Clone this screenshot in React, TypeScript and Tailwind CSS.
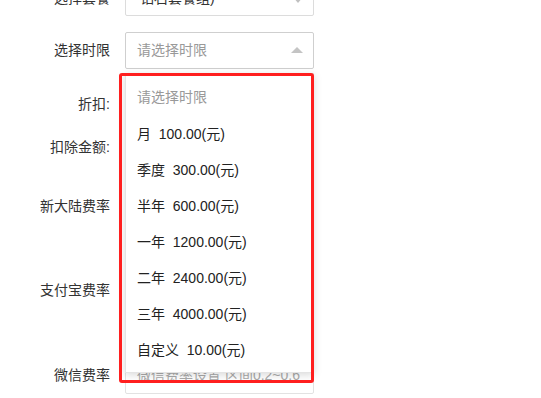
import React from "react";

// Options for the duration select
const options = [
  { name: "月", price: "100.00" },
  { name: "季度", price: "300.00" },
  { name: "半年", price: "600.00" },
  { name: "一年", price: "1200.00" },
  { name: "二年", price: "2400.00" },
  { name: "三年", price: "4000.00" },
  { name: "自定义", price: "10.00" },
];

const font = { fontFamily: '"Liberation Sans", "Noto Sans CJK SC", sans-serif' };

function Label({ children }: { children: React.ReactNode }) {
  return <div className="w-[110px] shrink-0 text-right text-[14px] text-[#333]">{children}</div>;
}

export default function App() {
  return (
    <div className="relative w-[541px] h-[398px] overflow-hidden bg-white" style={font}>
      <div className="flex flex-col -mt-[20px]">
        {/* package select */}
        <div className="flex items-center gap-[15px] h-[36px]">
          <Label>选择套餐</Label>
          <div className="relative flex items-center w-[189px] h-[36px] border border-[#dcdcdc] rounded-[2px] pl-[14px] text-[14px] text-[#333]">
            钻石套餐组)
            <span className="absolute right-[10px] top-[16px] w-0 h-0 border-x-[5px] border-x-transparent border-t-[6px] border-t-[#c0c0c0]" />
          </div>
        </div>

        {/* duration select */}
        <div className="flex items-center gap-[15px] h-[36px] mt-[16px]">
          <Label>选择时限</Label>
          <div className="relative flex items-center w-[189px] h-[37px] border border-[#cfcfcf] rounded-[2px] pl-[11px] text-[14px] text-[#999]">
            请选择时限
            <span className="absolute right-[10px] top-[14px] w-0 h-0 border-x-[6px] border-x-transparent border-b-[6px] border-b-[#c4c4c4]" />
          </div>
        </div>

        <div className="flex items-center h-[36px] mt-[18px]">
          <Label>折扣:</Label>
        </div>
        <div className="flex items-center h-[36px] mt-[7px]">
          <Label>扣除金额:</Label>
        </div>
        <div className="flex items-center h-[36px] mt-[23px]">
          <Label>新大陆费率</Label>
        </div>
        <div className="flex items-center h-[36px] mt-[48px]">
          <Label>支付宝费率</Label>
        </div>

        {/* wechat rate */}
        <div className="flex items-center gap-[15px] h-[37px] mt-[49px]">
          <Label>微信费率</Label>
          <div className="flex items-center w-[189px] h-[37px] border border-[#e2e2e2] rounded-[2px] pl-[11px] text-[14px] text-[#aaa]">
            微信费率设置 区间0.2~0.6
          </div>
        </div>
        <div className="flex items-center gap-[4px] pl-[125px] mt-[2px] text-[13px] text-[#ff2a2a]">
          <span className="w-[7px] h-[7px] bg-[#ff2a2a]" />
          必填
        </div>
      </div>

      {/* dropdown list */}
      <div className="absolute left-[125px] top-[73px] w-[189px] bg-white border border-[#e4e4e4] shadow-[0_2px_8px_rgba(0,0,0,0.15)] pt-[5px] pb-[4px]">
        <div className="h-[37px] flex items-center pl-[11px] text-[14px] text-[#999]">请选择时限</div>
        {options.map((o) => (
          <div key={o.name} className="h-[36px] flex items-center pl-[11px] text-[14px] text-[#222] whitespace-pre">
            {o.name + "  " + o.price + "(元)"}
          </div>
        ))}
      </div>

      {/* red annotation box */}
      <div className="absolute left-[119px] top-[73px] w-[195px] h-[310px] border-[3px] border-[#ff1f1f] rounded-[3px]" />
    </div>
  );
}
